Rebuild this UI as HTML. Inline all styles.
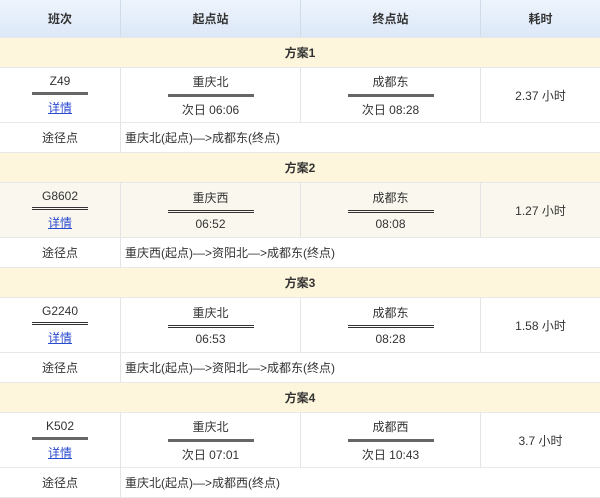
<!DOCTYPE html>
<html><head><meta charset="utf-8"><style>
*{margin:0;padding:0;box-sizing:border-box}
body{width:600px;height:495px;overflow:hidden;background:#fff;font-family:"Liberation Sans","Noto Sans CJK SC",sans-serif;font-size:12px;color:#333}
.r{position:absolute;left:0;width:600px;border-bottom:1px solid #e8e8e8}
.c{position:absolute;top:0;height:100%;display:flex;flex-direction:column;align-items:center;justify-content:center;border-right:1px solid #e4e4e4;text-align:center}
.c1{left:0;width:121px}.c2{left:121px;width:180px}.c3{left:301px;width:180px}.c4{left:481px;width:119px;border-right:none}
.hd{top:0;height:38px;background:linear-gradient(#eef4fc,#dce8f8);font-weight:bold;color:#333}
.hd .c{border-right-color:#cfdbe9}
.pl{height:30px;background:#fdf6dc;font-weight:bold;display:flex;align-items:center;justify-content:center}
.tr{height:55px}
.rt{height:30px}
.rt .c1{justify-content:center}
.rt .rtxt{position:absolute;left:125px;top:0;height:100%;display:flex;align-items:center}
.ln{margin:4px 0 4px;height:3px}
.s{background:#666}
.d{border-top:1px solid #333;border-bottom:1px solid #333}
.w1{width:56px}.w2{width:86px}
a{color:#2a4bd0;text-decoration:underline}
</style></head><body>
<div class="r hd"><div class="c c1">班次</div><div class="c c2">起点站</div><div class="c c3">终点站</div><div class="c c4">耗时</div></div>

<div class="r pl" style="top:38px">方案1</div>
<div class="r tr" style="top:68px"><div class="c c1">Z49<div class="ln s w1"></div><a>详情</a></div><div class="c c2">重庆北<div class="ln s w2"></div>次日 06:06</div><div class="c c3">成都东<div class="ln s w2"></div>次日 08:28</div><div class="c c4">2.37 小时</div></div>
<div class="r rt" style="top:123px"><div class="c c1">途径点</div><div class="rtxt">重庆北(起点)—&gt;成都东(终点)</div></div>

<div class="r pl" style="top:153px">方案2</div>
<div class="r tr" style="top:183px;background:#f9f7ee"><div class="c c1">G8602<div class="ln d w1"></div><a>详情</a></div><div class="c c2">重庆西<div class="ln d w2"></div>06:52</div><div class="c c3">成都东<div class="ln d w2"></div>08:08</div><div class="c c4">1.27 小时</div></div>
<div class="r rt" style="top:238px"><div class="c c1">途径点</div><div class="rtxt">重庆西(起点)—&gt;资阳北—&gt;成都东(终点)</div></div>

<div class="r pl" style="top:268px">方案3</div>
<div class="r tr" style="top:298px"><div class="c c1">G2240<div class="ln d w1"></div><a>详情</a></div><div class="c c2">重庆北<div class="ln d w2"></div>06:53</div><div class="c c3">成都东<div class="ln d w2"></div>08:28</div><div class="c c4">1.58 小时</div></div>
<div class="r rt" style="top:353px"><div class="c c1">途径点</div><div class="rtxt">重庆北(起点)—&gt;资阳北—&gt;成都东(终点)</div></div>

<div class="r pl" style="top:383px">方案4</div>
<div class="r tr" style="top:413px"><div class="c c1">K502<div class="ln s w1"></div><a>详情</a></div><div class="c c2">重庆北<div class="ln s w2"></div>次日 07:01</div><div class="c c3">成都西<div class="ln s w2"></div>次日 10:43</div><div class="c c4">3.7 小时</div></div>
<div class="r rt" style="top:468px"><div class="c c1">途径点</div><div class="rtxt">重庆北(起点)—&gt;成都西(终点)</div></div>
</body></html>
